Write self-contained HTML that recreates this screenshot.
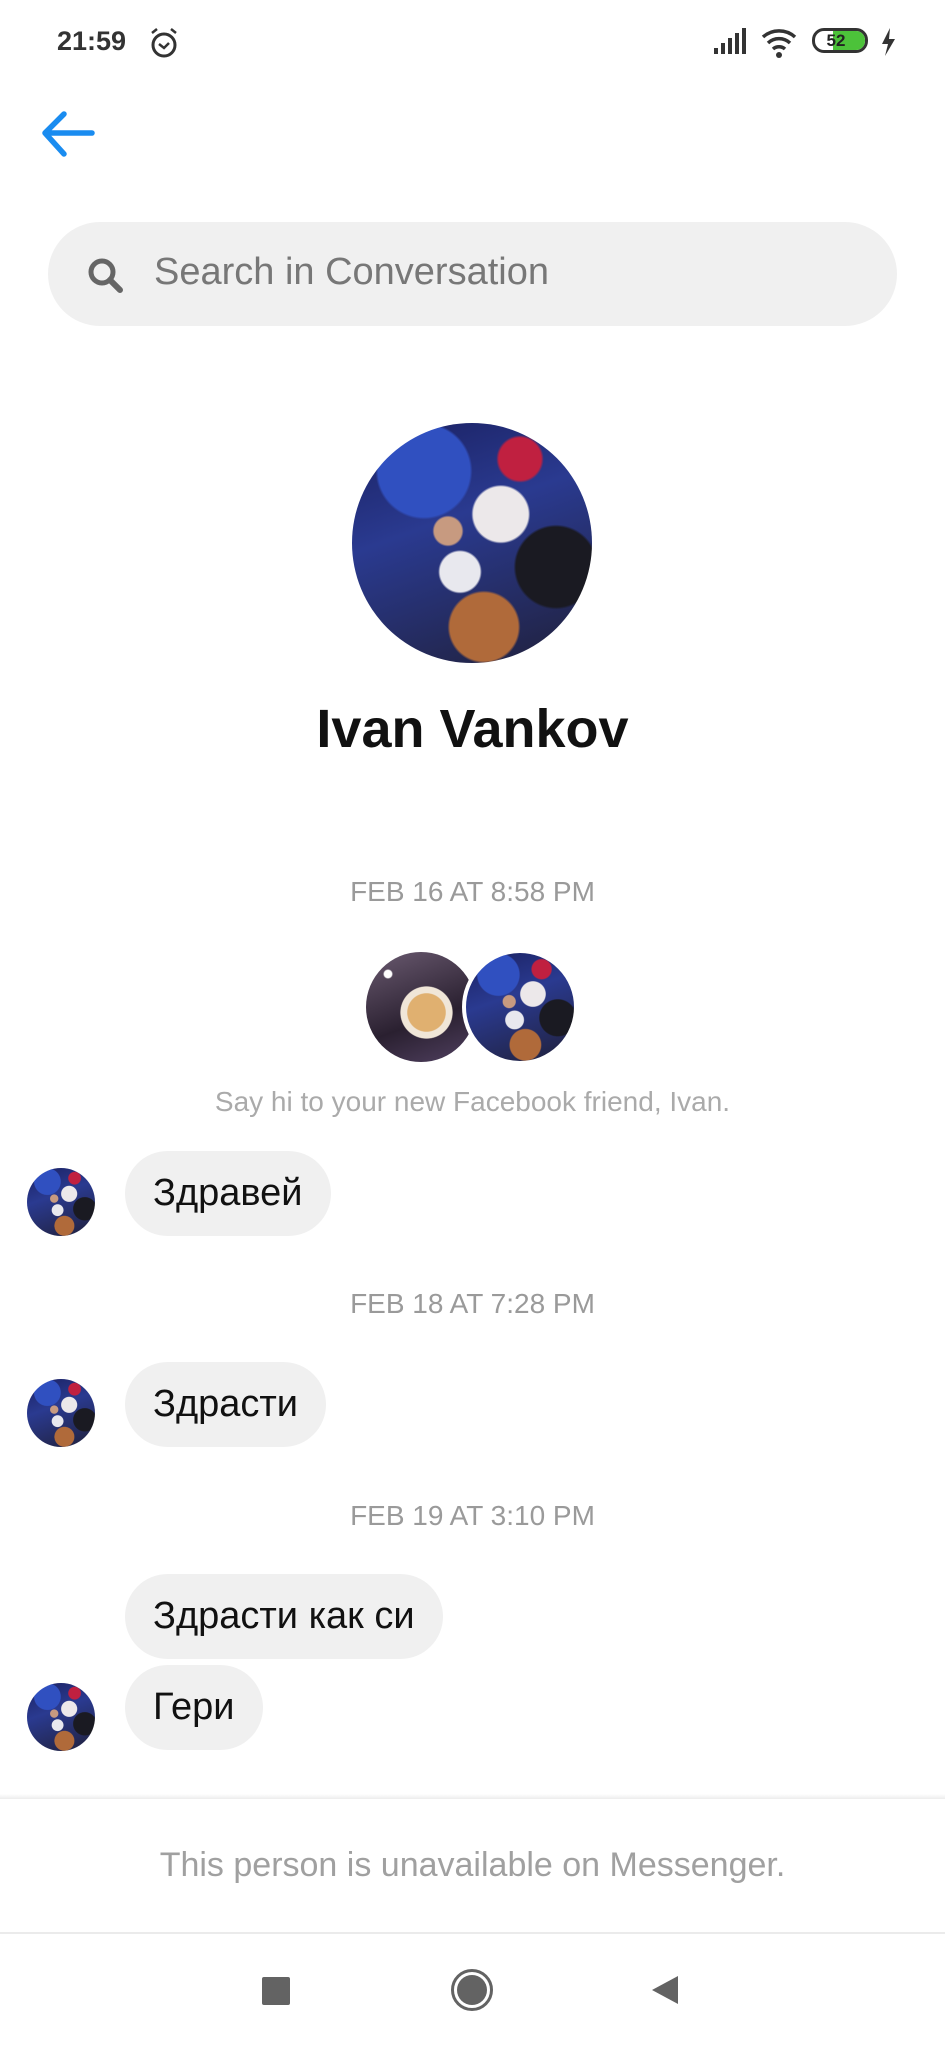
<!DOCTYPE html>
<html><head><meta charset="utf-8"><style>
*{margin:0;padding:0;box-sizing:border-box}
body{width:945px;height:2048px;background:#fff;position:relative;overflow:hidden;font-family:"Liberation Sans","Noto Sans CJK SC",sans-serif}
.a{position:absolute}
.av{position:absolute;border-radius:50%;overflow:hidden;background:
radial-gradient(circle at 45% 62%,#e8e8ee 0 10%,transparent 11%),
radial-gradient(circle at 40% 45%,#c79a80 0 7%,transparent 8%),
radial-gradient(circle at 62% 38%,#ece8ea 0 13%,transparent 14%),
radial-gradient(circle at 55% 85%,#b06a3a 0 14%,transparent 15%),
radial-gradient(circle at 85% 60%,#1a1a22 0 16%,transparent 17%),
radial-gradient(circle at 30% 20%,#3050c0 0 18%,transparent 19%),
radial-gradient(circle at 70% 15%,#c02040 0 8%,transparent 9%),
linear-gradient(160deg,#1a2060 0%,#2a3a90 40%,#20203a 100%)}
.ts{position:absolute;left:0;width:945px;text-align:center;color:#9a9a9a;font-size:28px}
.b{position:absolute;left:125px;height:85px;border-radius:43px;background:#f0f0f0;font-size:38px;color:#111;line-height:85px;padding:0 28px}
</style></head><body>
<div class="a" style="left:57px;top:26px;font-size:27px;font-weight:bold;color:#333">21:59</div>
<svg class="a" style="left:148px;top:26px" width="32" height="34" viewBox="0 0 32 34"><circle cx="16" cy="19" r="11" fill="none" stroke="#333" stroke-width="3"/><path d="M11 18l5 4 5-5M4 7l5-4M28 7l-5-4" fill="none" stroke="#333" stroke-width="2.5"/></svg>
<svg class="a" style="left:712px;top:28px" width="40" height="28"><rect x="2" y="20" width="4" height="6" fill="#333"/><rect x="9" y="15" width="4" height="11" fill="#333"/><rect x="16" y="10" width="4" height="16" fill="#333"/><rect x="23" y="5" width="4" height="21" fill="#333"/><rect x="30" y="0" width="4" height="26" fill="#333"/></svg>
<svg class="a" style="left:760px;top:26px" width="40" height="34" viewBox="0 0 40 34"><path d="M3 11a24 24 0 0 1 32 0M8 17a16 16 0 0 1 22 0M13 23a9 9 0 0 1 12 0" fill="none" stroke="#333" stroke-width="3.5"/><circle cx="19" cy="29" r="3" fill="#333"/></svg>
<div class="a" style="left:812px;top:28px;width:56px;height:25px;border:3px solid #333;border-radius:12px;overflow:hidden"><div style="position:absolute;left:18px;top:0;width:40px;height:100%;background:#4cc23a"></div><div style="position:relative;text-align:center;font-size:17px;font-weight:bold;line-height:19px;color:#222;margin-left:-8px">52</div></div>
<svg class="a" style="left:880px;top:28px" width="16" height="28"><path d="M10 0L2 16h6L5 28l10-17H9z" fill="#333"/></svg>
<svg class="a" style="left:40px;top:110px" width="56" height="48" viewBox="0 0 56 48"><path d="M52 23H6M24 4L5 23l19 21" fill="none" stroke="#1a8cf0" stroke-width="5.5" stroke-linecap="round" stroke-linejoin="round"/></svg>
<div class="a" style="left:48px;top:222px;width:849px;height:104px;border-radius:52px;background:#f0f0f0"></div>
<svg class="a" style="left:86px;top:256px" width="40" height="40" viewBox="0 0 40 40"><circle cx="16" cy="16" r="11" fill="none" stroke="#666" stroke-width="5"/><path d="M24 24l10 10" stroke="#666" stroke-width="6" stroke-linecap="round"/></svg>
<div class="a" style="left:154px;top:251px;font-size:38px;color:#777">Search in Conversation</div>
<div class="av" style="left:352px;top:423px;width:240px;height:240px"></div>
<div class="a" style="left:0;top:698px;width:945px;text-align:center;font-size:54px;font-weight:bold;color:#111">Ivan Vankov</div>
<div class="ts" style="top:876px">FEB 16 AT 8:58 PM</div>
<div class="a" style="left:366px;top:952px;width:110px;height:110px;border-radius:50%;background:radial-gradient(circle at 55% 55%,#e0b070 0 22%,#f0e6d8 23% 30%,transparent 31%),radial-gradient(circle at 20% 20%,#fff 0 3%,transparent 4%),linear-gradient(160deg,#6a5a70,#2a2030 60%,#504060)"></div>
<div class="av" style="left:462px;top:949px;width:116px;height:116px;border:4px solid #fff"></div>
<div class="ts" style="top:1086px;color:#aaa">Say hi to your new Facebook friend, Ivan.</div>
<div class="av" style="left:27px;top:1168px;width:68px;height:68px"></div>
<div class="b" style="top:1151px">Здравей</div>
<div class="ts" style="top:1288px">FEB 18 AT 7:28 PM</div>
<div class="av" style="left:27px;top:1379px;width:68px;height:68px"></div>
<div class="b" style="top:1362px">Здрасти</div>
<div class="ts" style="top:1500px">FEB 19 AT 3:10 PM</div>
<div class="b" style="top:1574px">Здрасти как си</div>
<div class="av" style="left:27px;top:1683px;width:68px;height:68px"></div>
<div class="b" style="top:1665px">Гери</div>
<div class="a" style="left:0;top:1794px;width:945px;height:5px;background:linear-gradient(#fff,#ececec)"></div>
<div class="a" style="left:0;top:1846px;width:945px;text-align:center;font-size:34px;color:#a0a0a0">This person is unavailable on Messenger.</div>
<div class="a" style="left:0;top:1932px;width:945px;height:2px;background:#ebebeb"></div>
<div class="a" style="left:262px;top:1977px;width:28px;height:28px;background:#636363;border-radius:2px"></div>
<div class="a" style="left:451px;top:1969px;width:42px;height:42px;border-radius:50%;border:3px solid #636363;padding:3px"><div style="width:100%;height:100%;border-radius:50%;background:#636363"></div></div>
<svg class="a" style="left:650px;top:1975px" width="30" height="30"><path d="M28 1v28L2 15z" fill="#636363"/></svg>
</body></html>
